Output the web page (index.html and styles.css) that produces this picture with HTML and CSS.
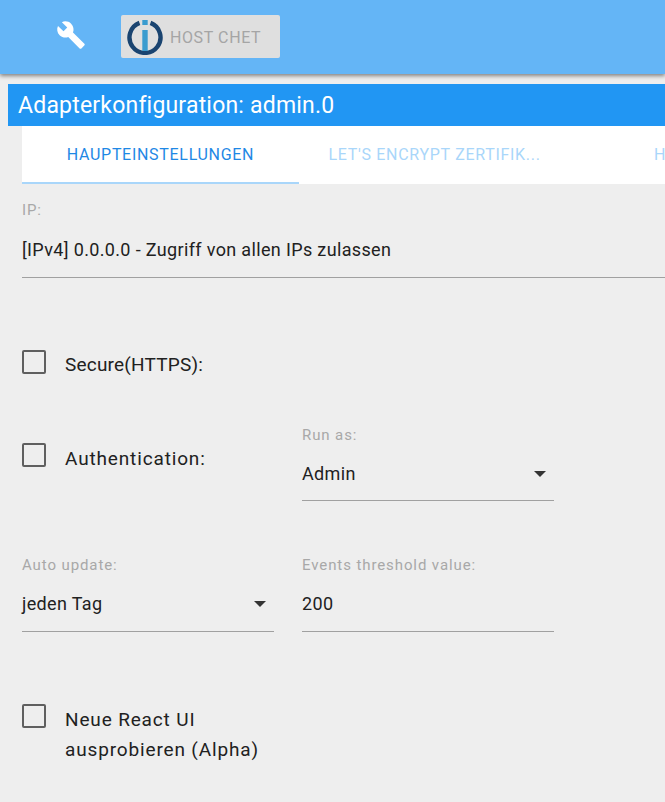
FILE: index.html
```html
<!DOCTYPE html>
<html lang="de">
  <head>
    <meta name="viewport" content="width=device-width, initial-scale=1.0" />
    <meta charset="utf-8" />
    <title>Adapterkonfiguration</title>
    <link rel="stylesheet" href="styles.css">
  </head>

  <body>
    <header class="topbar">
      <svg class="wrench" viewBox="0 0 24 24" width="30" height="30">
        <path fill="#fff" d="M22.7 19l-9.1-9.1c.9-2.3.4-5-1.5-6.9-2-2-5-2.4-7.4-1.3L9 6 6 9 1.6 4.7C.4 7.1.9 10.1 2.9 12.1c1.9 1.9 4.6 2.4 6.9 1.5l9.1 9.1c.4.4 1 .4 1.4 0l2.3-2.3c.5-.4.5-1.1.1-1.4z"/>
      </svg>
      <div class="host">
        <svg class="logo" viewBox="0 0 36 36" width="36" height="36">
          <path d="M12.5 3.9a15.5 15.5 0 1 0 11 0" fill="none" stroke="#1a4470" stroke-width="4.4"/>
          <rect x="15.3" y="11" width="5.4" height="21" fill="#3a9ccf"/>
          <rect x="15.3" y="1" width="5.4" height="5" fill="#3a9ccf"/>
        </svg>
        <span class="host-name">HOST CHET</span>
      </div>
    </header>

    <h1 class="title">Adapterkonfiguration: admin.0</h1>

    <nav class="tabs">
      <div class="tab active">HAUPTEINSTELLUNGEN</div>
      <div class="tab tab-second">LET'S ENCRYPT ZERTIFIK...</div>
      <div class="tab tab-last">H</div>
    </nav>

    <main class="form">
      <div class="field field-ip">
        <label class="field-label">IP:</label>
        <div class="field-value">[IPv4] 0.0.0.0 - Zugriff von allen IPs zulassen</div>
      </div>

      <div class="check-row row-secure">
        <span class="checkbox"></span>
        <span class="check-label label-caps">Secure(HTTPS):</span>
      </div>

      <div class="row row-auth">
        <div class="check-row cell">
          <span class="checkbox"></span>
          <span class="check-label">Authentication:</span>
        </div>
        <div class="field cell">
          <label class="field-label">Run as:</label>
          <div class="field-value">Admin<span class="caret"></span></div>
        </div>
      </div>

      <div class="row row-update">
        <div class="field cell">
          <label class="field-label">Auto update:</label>
          <div class="field-value">jeden Tag<span class="caret"></span></div>
        </div>
        <div class="field cell">
          <label class="field-label">Events threshold value:</label>
          <div class="field-value">200</div>
        </div>
      </div>

      <div class="check-row row-react">
        <span class="checkbox"></span>
        <span class="check-label">Neue React UI<br />ausprobieren (Alpha)</span>
      </div>
    </main>
  </body>
</html>
```

FILE: styles.css
```css
* {
  box-sizing: border-box;
}

html,
body {
  height: 100%;
}

body {
  margin: 0;
  overflow: hidden;
  background: #eeeeee;
  font-family: Roboto, "Noto Sans", sans-serif;
  color: #212121;
}

.topbar {
  display: flex;
  align-items: center;
  height: 74px;
  padding-left: 56px;
  background: #64b5f6;
  box-shadow: 0 2px 4px rgba(0, 0, 0, 0.45);
}

.wrench {
  margin: -5px 35px 0 0;
}

.host {
  display: flex;
  align-items: center;
  gap: 7px;
  width: 159px;
  height: 43px;
  margin-top: -1px;
  padding-left: 6px;
  border-radius: 2px;
  background: #dfdfdf;
  color: #a5a5a5;
  font-size: 16px;
  letter-spacing: 0.6px;
}

.host-name {
  padding-top: 2px;
}

.title {
  height: 42px;
  margin: 10px 0 0 8px;
  padding-left: 10px;
  background: #2196f3;
  color: #fff;
  font-size: 23px;
  font-weight: 400;
  line-height: 44px;
  letter-spacing: 0.2px;
  white-space: nowrap;
}

.tabs {
  display: flex;
  height: 58px;
  margin-left: 22px;
  background: #fff;
  white-space: nowrap;
}

.tab {
  flex: 0 0 277px;
  height: 58px;
  color: #a9d6fa;
  font-size: 16px;
  line-height: 58px;
  text-align: center;
  letter-spacing: 0.7px;
}

.tab.active {
  border-bottom: 2px solid #a9d6fa;
  color: #1e88e5;
}

.tab-second {
  padding-right: 6px;
}

.tab-last {
  flex: 1 1 0;
  padding-left: 78px;
  text-align: left;
}

.form {
  padding-left: 22px;
}

.field {
  display: flex;
  flex-direction: column;
}

.field-label {
  color: #a8a8a8;
  font-size: 15px;
  line-height: 16px;
  letter-spacing: 0.9px;
}

.field-value {
  display: flex;
  align-items: center;
  justify-content: space-between;
  height: 58px;
  padding-top: 4px;
  border-bottom: 1px solid #a0a0a0;
  font-size: 18px;
  letter-spacing: 0.35px;
}

.field-ip {
  margin-top: 18px;
}

.field-ip .field-value {
  height: 60px;
  padding-top: 4px;
}

.row-update .field-value {
  height: 59px;
  padding-top: 3px;
}

.caret {
  width: 0;
  height: 0;
  margin-right: 8px;
  border-left: 6px solid transparent;
  border-right: 6px solid transparent;
  border-top: 6px solid #333;
}

.check-row {
  display: flex;
  align-items: flex-start;
}

.checkbox {
  flex: none;
  width: 24px;
  height: 24px;
  margin-right: 19px;
  border: 2px solid #5f5f5f;
  border-radius: 2px;
}

.check-label {
  font-size: 19px;
  line-height: 30px;
  letter-spacing: 0.85px;
}

.label-caps {
  letter-spacing: 0.2px;
}

.row {
  display: flex;
  gap: 28px;
}

.cell {
  width: 252px;
}

.row-secure {
  margin-top: 72px;
}

.row-auth {
  margin-top: 47px;
}

.row-auth .check-row {
  padding-top: 16px;
}

.row-auth .check-label,
.row-react .check-label {
  padding-top: 1px;
}

.row-update {
  margin-top: 56px;
}

.row-react {
  margin-top: 72px;
}
```
